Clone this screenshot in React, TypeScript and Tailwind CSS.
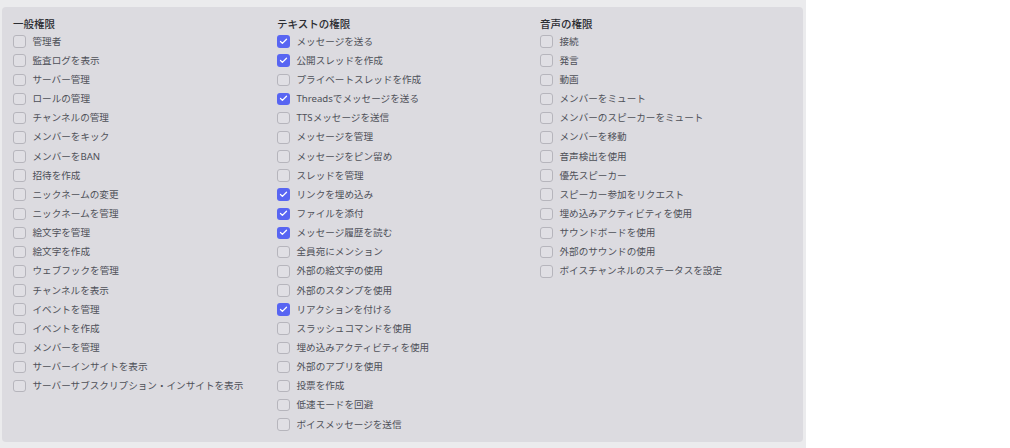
import { Check } from "lucide-react";

interface Permission {
	label: string;
	on?: boolean;
}

interface Group {
	title: string;
	items: Permission[];
}

const groups: Group[] = [
	{
		title: "一般権限",
		items: [
			{ label: "管理者" },
			{ label: "監査ログを表示" },
			{ label: "サーバー管理" },
			{ label: "ロールの管理" },
			{ label: "チャンネルの管理" },
			{ label: "メンバーをキック" },
			{ label: "メンバーをBAN" },
			{ label: "招待を作成" },
			{ label: "ニックネームの変更" },
			{ label: "ニックネームを管理" },
			{ label: "絵文字を管理" },
			{ label: "絵文字を作成" },
			{ label: "ウェブフックを管理" },
			{ label: "チャンネルを表示" },
			{ label: "イベントを管理" },
			{ label: "イベントを作成" },
			{ label: "メンバーを管理" },
			{ label: "サーバーインサイトを表示" },
			{ label: "サーバーサブスクリプション・インサイトを表示" },
		],
	},
	{
		title: "テキストの権限",
		items: [
			{ label: "メッセージを送る", on: true },
			{ label: "公開スレッドを作成", on: true },
			{ label: "プライベートスレッドを作成" },
			{ label: "Threadsでメッセージを送る", on: true },
			{ label: "TTSメッセージを送信" },
			{ label: "メッセージを管理" },
			{ label: "メッセージをピン留め" },
			{ label: "スレッドを管理" },
			{ label: "リンクを埋め込み", on: true },
			{ label: "ファイルを添付", on: true },
			{ label: "メッセージ履歴を読む", on: true },
			{ label: "全員宛にメンション" },
			{ label: "外部の絵文字の使用" },
			{ label: "外部のスタンプを使用" },
			{ label: "リアクションを付ける", on: true },
			{ label: "スラッシュコマンドを使用" },
			{ label: "埋め込みアクティビティを使用" },
			{ label: "外部のアプリを使用" },
			{ label: "投票を作成" },
			{ label: "低速モードを回避" },
			{ label: "ボイスメッセージを送信" },
		],
	},
	{
		title: "音声の権限",
		items: [
			{ label: "接続" },
			{ label: "発言" },
			{ label: "動画" },
			{ label: "メンバーをミュート" },
			{ label: "メンバーのスピーカーをミュート" },
			{ label: "メンバーを移動" },
			{ label: "音声検出を使用" },
			{ label: "優先スピーカー" },
			{ label: "スピーカー参加をリクエスト" },
			{ label: "埋め込みアクティビティを使用" },
			{ label: "サウンドボードを使用" },
			{ label: "外部のサウンドの使用" },
			{ label: "ボイスチャンネルのステータスを設定" },
		],
	},
];

export default function App() {
	return (
		<div
			className="w-[1010px] h-[448px] bg-white flex"
			style={{ fontFamily: '"Noto Sans", "Noto Sans CJK JP", sans-serif' }}
		>
			<div className="w-[806px] h-full bg-[#ebebed] flex flex-col px-[2px] pt-[7px] pb-[6px]">
				<section className="flex-1 w-[801px] bg-[#dcdbe0] rounded-[4px] pl-[11px] pt-[10px] grid grid-cols-[264px_263px_1fr]">
					{groups.map((g) => (
						<PermissionColumn key={g.title} group={g} />
					))}
				</section>
			</div>
		</div>
	);
}

const PermissionColumn = ({ group }: { group: Group }) => {
	return (
		<div className="flex flex-col">
			<h3 className="h-[15px] flex items-center text-[10.5px] font-medium text-[#2b2c31] leading-none">
				{group.title}
			</h3>
			<ul className="flex flex-col">
				{group.items.map((p) => (
					<li
						key={p.label}
						className="h-[19.15px] flex items-center gap-[7px] text-[9.6px] text-[#4e5058] leading-none"
					>
						<CheckBox on={p.on} />
						<span>{p.label}</span>
					</li>
				))}
			</ul>
		</div>
	);
};

const CheckBox = ({ on }: { on?: boolean }) => {
	if (on) {
		return (
			<span className="w-[12.5px] h-[12.5px] rounded-[3px] bg-[#5865f2] flex items-center justify-center shrink-0">
				<Check className="w-[9px] h-[9px] text-white" strokeWidth={3.5} />
			</span>
		);
	}
	return (
		<span className="w-[12.5px] h-[12.5px] rounded-[3px] border border-[#b6b5bc] bg-[#e0dfe4] shrink-0" />
	);
};
